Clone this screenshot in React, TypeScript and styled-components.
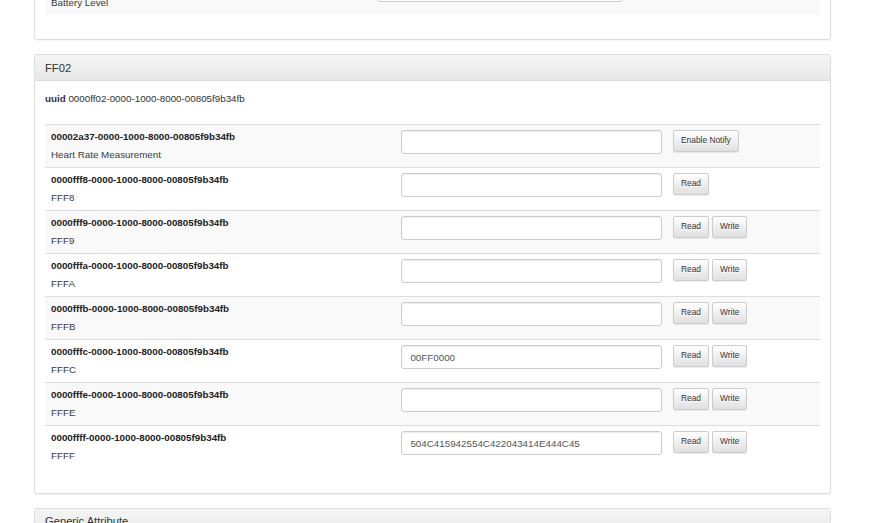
import React from 'react';
import styled, { createGlobalStyle } from 'styled-components';

interface Characteristic {
    uuid: string;
    name: string;
    value: string;
    actions: string[];
}

const GlobalStyle = createGlobalStyle`
  html, body {
    margin: 0;
    background: #fff;
  }
  body {
    font-family: "Liberation Sans", Arial, Helvetica, sans-serif;
    font-size: 9.8px;
    line-height: 14px;
    color: #333;
    overflow: hidden;
  }
`;

const Page = styled.div`
  width: 797px;
  margin: -40px 0 0 34px;
`;

const Panel = styled.section`
  margin-bottom: 14px;
  background: #fff;
  border: 1px solid #ddd;
  border-radius: 3px;
  box-shadow: 0 1px 1px rgba(0, 0, 0, 0.05);
`;

const PanelHeading = styled.div`
  padding: 6.5px 10px;
  background: linear-gradient(to bottom, #f5f5f5 0%, #e8e8e8 100%);
  border-bottom: 1px solid #ddd;
  border-radius: 3px 3px 0 0;
  font-size: 11.2px;
  line-height: 12px;
  color: #333;
`;

const PanelBody = styled.div`
  padding: 10.5px 10px;
`;

const UuidLine = styled.p`
  margin: 0 0 18.5px;
  line-height: 14px;

  b {
    font-weight: bold;
  }
`;

const Table = styled.div`
  margin-bottom: 14px;
`;

const Row = styled.div<{ $cols: string }>`
  display: grid;
  grid-template-columns: ${p => p.$cols};
  border-top: 1px solid #ddd;

  &:nth-child(odd) {
    background: #f9f9f9;
  }
`;

const Cell = styled.div`
  padding: 5px 6px;
  min-width: 0;
`;

const CharUuid = styled.div`
  font-weight: bold;
  line-height: 14px;
  color: #222;
`;

const CharName = styled.div`
  margin-top: 4px;
  line-height: 14px;
  color: #3a3a3a;
`;

const ValueInput = styled.input`
  display: block;
  width: calc(100% + 1px);
  height: 24px;
  box-sizing: border-box;
  margin: 0;
  padding: 4px 8.4px;
  font-family: inherit;
  font-size: 9.8px;
  color: #555;
  background: #fff;
  border: 1px solid #ccc;
  border-radius: 3px;
  box-shadow: inset 0 1px 1px rgba(0, 0, 0, 0.075);
  outline: none;
`;

const Actions = styled.div`
  display: flex;
  gap: 3px;
`;

const Button = styled.button`
  height: 21.5px;
  margin: 0;
  padding: 0 7px;
  font-family: inherit;
  font-size: 8.4px;
  line-height: 12.6px;
  color: #333;
  text-shadow: 0 1px 0 #fff;
  background: linear-gradient(to bottom, #fff 0%, #e0e0e0 100%);
  border: 1px solid #ccc;
  border-radius: 2px;
  box-shadow: inset 0 1px 0 rgba(255, 255, 255, 0.15), 0 1px 1px rgba(0, 0, 0, 0.075);
  cursor: pointer;
`;

const batteryRows: Characteristic[] = [
    { uuid: '00002a19-0000-1000-8000-00805f9b34fb', name: 'Battery Level', value: '', actions: [] },
];

const ff02Rows: Characteristic[] = [
    { uuid: '00002a37-0000-1000-8000-00805f9b34fb', name: 'Heart Rate Measurement', value: '', actions: ['Enable Notify'] },
    { uuid: '0000fff8-0000-1000-8000-00805f9b34fb', name: 'FFF8', value: '', actions: ['Read'] },
    { uuid: '0000fff9-0000-1000-8000-00805f9b34fb', name: 'FFF9', value: '', actions: ['Read', 'Write'] },
    { uuid: '0000fffa-0000-1000-8000-00805f9b34fb', name: 'FFFA', value: '', actions: ['Read', 'Write'] },
    { uuid: '0000fffb-0000-1000-8000-00805f9b34fb', name: 'FFFB', value: '', actions: ['Read', 'Write'] },
    { uuid: '0000fffc-0000-1000-8000-00805f9b34fb', name: 'FFFC', value: '00FF0000', actions: ['Read', 'Write'] },
    { uuid: '0000fffe-0000-1000-8000-00805f9b34fb', name: 'FFFE', value: '', actions: ['Read', 'Write'] },
    { uuid: '0000ffff-0000-1000-8000-00805f9b34fb', name: 'FFFF', value: '504C415942554C422043414E444C45', actions: ['Read', 'Write'] },
];

const CharTable = ({ rows, cols }: { rows: Characteristic[]; cols: string }) => (
    <Table>
        {rows.map(row => (
            <Row key={row.uuid} $cols={cols}>
                <Cell>
                    <CharUuid>{row.uuid}</CharUuid>
                    <CharName>{row.name}</CharName>
                </Cell>
                <Cell>
                    <ValueInput type="text" defaultValue={row.value} readOnly />
                </Cell>
                <Cell>
                    <Actions>
                        {row.actions.map(a => (
                            <Button key={a}>{a}</Button>
                        ))}
                    </Actions>
                </Cell>
            </Row>
        ))}
    </Table>
);

export default function App() {
    return (
        <>
            <GlobalStyle />
            <Page>
                <Panel>
                    <PanelBody>
                        <CharTable rows={batteryRows} cols="326px 257px 1fr" />
                    </PanelBody>
                </Panel>

                <Panel>
                    <PanelHeading>FF02</PanelHeading>
                    <PanelBody>
                        <UuidLine>
                            <b>uuid</b> 0000ff02-0000-1000-8000-00805f9b34fb
                        </UuidLine>
                        <CharTable rows={ff02Rows} cols="350px 272px 1fr" />
                    </PanelBody>
                </Panel>

                <Panel>
                    <PanelHeading>Generic Attribute</PanelHeading>
                    <PanelBody>
                        <UuidLine>
                            <b>uuid</b> 00001801-0000-1000-8000-00805f9b34fb
                        </UuidLine>
                    </PanelBody>
                </Panel>
            </Page>
        </>
    );
}
